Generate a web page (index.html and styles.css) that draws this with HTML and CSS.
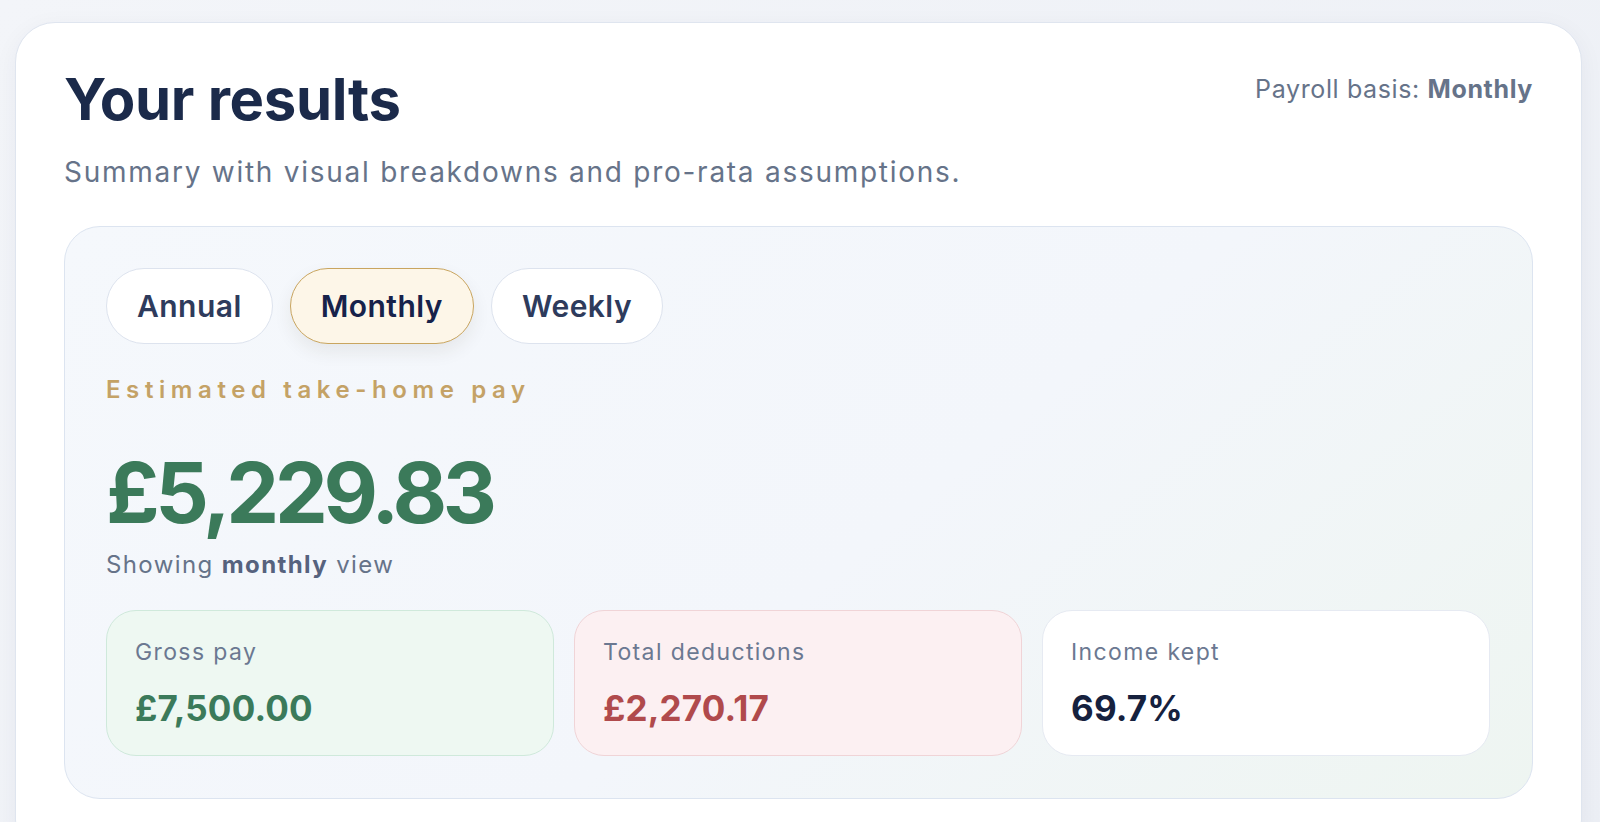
FILE: index.html
```html
<!DOCTYPE html>
<html lang="en">
<head>
    <meta charset="UTF-8">
    <meta name="viewport" content="width=device-width, initial-scale=1.0">
    <title>Take-home pay - Your results</title>
    <link rel="stylesheet" href="styles.css">
</head>
<body>
    <div class="page">
        <section class="results-card">
            <div class="results-header">
                <div>
                    <h1>Your results</h1>
                    <p class="subtitle">Summary with visual breakdowns and pro-rata assumptions.</p>
                </div>
                <div class="basis">Payroll basis: <strong>Monthly</strong></div>
            </div>

            <div class="summary-panel">
                <div class="period-tabs">
                    <button class="tab">Annual</button>
                    <button class="tab active">Monthly</button>
                    <button class="tab">Weekly</button>
                </div>

                <div class="eyebrow">Estimated take-home pay</div>
                <div class="take-home">£5,229.83</div>
                <div class="view-note">Showing <strong>monthly</strong> view</div>

                <div class="stats">
                    <div class="stat stat-gross">
                        <div class="stat-label">Gross pay</div>
                        <div class="stat-value">£7,500.00</div>
                    </div>
                    <div class="stat stat-deductions">
                        <div class="stat-label">Total deductions</div>
                        <div class="stat-value">£2,270.17</div>
                    </div>
                    <div class="stat stat-kept">
                        <div class="stat-label">Income kept</div>
                        <div class="stat-value">69.7%</div>
                    </div>
                </div>
            </div>
        </section>
    </div>
</body>
</html>
```

FILE: styles.css
```css
* {
    box-sizing: border-box;
}
body {
    margin: 0;
    font-family: 'Inter', 'Noto Sans', sans-serif;
    background: linear-gradient(135deg, #f3f5f9 0%, #eceff5 100%);
    min-height: 100vh;
}
.page {
    padding: 22px 18px 0 15px;
}
.results-card {
    background: #ffffff;
    border: 1px solid #dfe5ef;
    border-radius: 40px;
    padding: 44px 48px 60px 48px;
    box-shadow: 0 6px 24px rgba(30, 45, 80, 0.05);
    min-height: 820px;
}
.results-header {
    display: flex;
    justify-content: space-between;
    align-items: flex-start;
}
h1 {
    margin: 0;
    font-size: 58px;
    line-height: 64px;
    font-weight: 700;
    letter-spacing: -0.005em;
    color: #1b2a4a;
}
.subtitle {
    margin: 23px 0 0 0;
    font-size: 28px;
    line-height: 36px;
    color: #667389;
    letter-spacing: 0.062em;
}
.basis {
    margin-top: 7px;
    font-size: 25px;
    line-height: 30px;
    color: #667389;
    letter-spacing: 0.025em;
}
.basis strong {
    font-weight: 700;
}
.summary-panel {
    margin-top: 36px;
    border: 1px solid #dce4f0;
    border-radius: 36px;
    padding: 41px 42px 42px 41px;
    background: linear-gradient(140deg, #f5f8fc 0%, #f3f6fb 55%, #eef5f1 100%);
}
.period-tabs {
    display: flex;
    gap: 17px;
}
.tab {
    font-family: inherit;
    font-size: 30px;
    line-height: 36px;
    font-weight: 600;
    letter-spacing: 0.015em;
    color: #2e3b5c;
    background: #ffffff;
    border: 1.5px solid #dde3ee;
    border-radius: 999px;
    padding: 19px 30px;
    cursor: pointer;
}
.tab.active {
    background: #fdf6e8;
    border-color: #c9a55f;
    color: #17224a;
    box-shadow: 0 8px 18px rgba(60, 50, 20, 0.08);
}
.eyebrow {
    margin-top: 32px;
    font-size: 24px;
    line-height: 28px;
    font-weight: 600;
    letter-spacing: 0.233em;
    color: #c4a266;
}
.take-home {
    margin-top: 47px;
    font-size: 84px;
    line-height: 84px;
    font-weight: 700;
    letter-spacing: -0.052em;
    color: #3b7a5a;
}
.view-note {
    margin-top: 15px;
    font-size: 24px;
    line-height: 30px;
    letter-spacing: 0.058em;
    color: #667389;
}
.view-note strong {
    color: #56627e;
}
.stats {
    margin-top: 30px;
    display: grid;
    grid-template-columns: repeat(3, 1fr);
    gap: 20px;
}
.stat {
    border: 1.5px solid #e6eaf2;
    border-radius: 30px;
    padding: 27px 28px 27px 28px;
    background: #ffffff;
}
.stat-label {
    font-size: 23px;
    line-height: 28px;
    letter-spacing: 0.06em;
    color: #6b7891;
}
.stat-value {
    margin-top: 22px;
    font-size: 35px;
    line-height: 40px;
    font-weight: 700;
    letter-spacing: 0.005em;
    color: #16213e;
}
.stat-gross {
    background: #eef8f2;
    border-color: #cfe9db;
}
.stat-gross .stat-value {
    color: #3b7a5a;
}
.stat-deductions {
    background: #fcf0f2;
    border-color: #f0d4d7;
}
.stat-deductions .stat-value {
    color: #b04a4c;
}
```
